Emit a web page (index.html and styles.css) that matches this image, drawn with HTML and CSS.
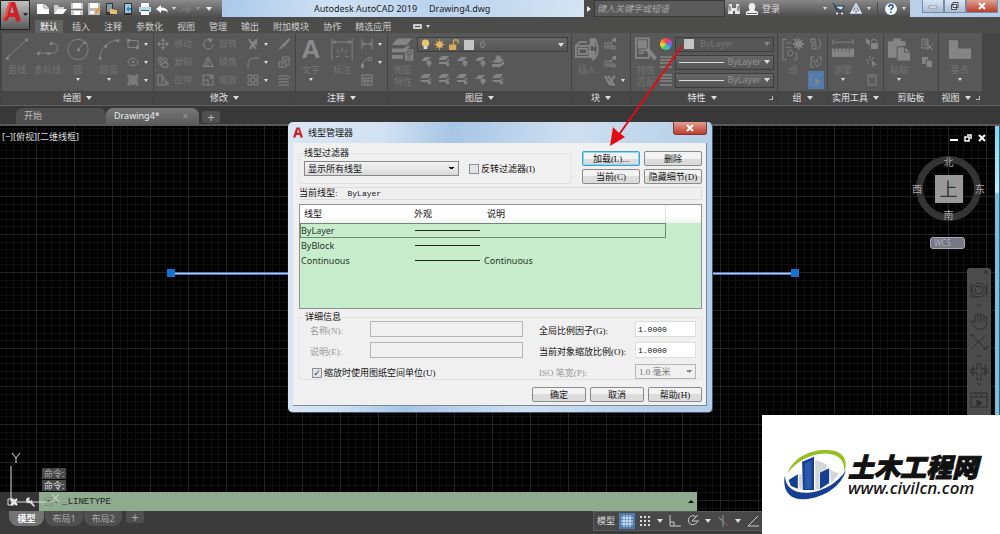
FILE: index.html
```html
<!DOCTYPE html>
<html lang="zh-CN">
<head>
    <meta charset="UTF-8">
    <meta name="viewport" content="width=device-width, initial-scale=1.0">
    <title>Autodesk AutoCAD 2019</title>
    <link rel="stylesheet" href="styles.css">
</head>
<body>

<!-- Iconos compartidos -->
<svg class="sprite" aria-hidden="true">
    <symbol id="line" viewBox="0 0 26 26"><path d="M2 22 24 2"/><path d="M1 21h3v3H1zM22 1h3v3h-3z" class="solid"/></symbol>
    <symbol id="pline" viewBox="0 0 26 26"><path d="M2 17h16a5.500 5.500 0 0 0 0-11M2 17l3-3"/><path d="M1 16h3v3H1zM12 16h3v3h-3zM15 5h3v3h-3z" class="solid"/></symbol>
    <symbol id="circle" viewBox="0 0 26 26"><circle cx="13" cy="13" r="11"/><path d="m13 13 7-8"/><path d="M12 12h3v3h-3zM19 4h3v3h-3z" class="solid"/></symbol>
    <symbol id="arc" viewBox="0 0 26 26"><path d="M3 23C4 12 10 4 23 3"/><path d="M2 21h3v3H2zM8 8h3v3H8zM21 2h3v3h-3z" class="solid"/></symbol>
    <symbol id="rect" viewBox="0 0 12 12"><path d="M1 2.500h10v7H1z"/><path d="M0 1h3v3H0zM9 8h3v3H9z" class="solid"/></symbol>
    <symbol id="ellipse" viewBox="0 0 12 12"><ellipse cx="6" cy="6" rx="5" ry="3.500"/><path d="M5 5h2v2H5z" class="solid"/></symbol>
    <symbol id="hatch" viewBox="0 0 12 12"><path d="M2 0v12M10 0v12M0 2h12M0 10h12M4 2v8M6 2v8M8 2v8M2 4h8M2 6h8M2 8h8"/></symbol>
    <symbol id="move" viewBox="0 0 12 12"><path d="M6 2v8M2 6h8"/><path d="m6 0 2.500 3h-5zM6 12l2.500-3h-5zM0 6l3-2.500v5zM12 6 9 3.500v5z" class="solid"/></symbol>
    <symbol id="rotate" viewBox="0 0 12 12"><path d="M8 2a4.700 4.700 0 1 0 3 5"/><path d="m6 0 5 1-3 4z" class="solid"/></symbol>
    <symbol id="copy" viewBox="0 0 12 12"><circle cx="3" cy="3" r="2"/><circle cx="8" cy="4" r="2"/><path d="M3 5v4h2M5 7h6v4H5z"/></symbol>
    <symbol id="mirror" viewBox="0 0 12 12"><path d="M6 1 1 10.500h10zM6 1v10M4 7v3"/></symbol>
    <symbol id="stretch" viewBox="0 0 12 12"><path d="M1 1h4l5 10H1zM5 1v10M7 8h4v3"/></symbol>
    <symbol id="scale" viewBox="0 0 12 12"><path d="M1 1h10v10H1zM1 6h5v5M7 5l3-3M7 2h3v3"/></symbol>
    <symbol id="trim" viewBox="0 0 12 12"><path d="m2 1 3 5 4 5M9 1v5L5 7l-2 4M5 6l3-3" stroke-width="2"/></symbol>
    <symbol id="fillet" viewBox="0 0 12 12"><path d="M1 12V8c0-4 3-6 7-6h4"/></symbol>
    <symbol id="array" viewBox="0 0 12 12"><path d="M1 1h4v4H1zM7 1h4v4H7zM1 7h4v4H1zM7 7h4v4H7z"/></symbol>
    <symbol id="erase" viewBox="0 0 12 12"><path d="m11 0 1 2-6 7-3-1zM3 8l2 2-5 2z" class="solid"/></symbol>
    <symbol id="explode" viewBox="0 0 12 12"><path d="M1 6h7v5H1zM4 4h7v5H8M4 4l1-3h6v3M3 8h3"/></symbol>
    <symbol id="offset" viewBox="0 0 12 12"><path d="M0 2h9c3 0 3 3 0 3M0 5h9M0 8h11M0 11h11"/></symbol>
    <symbol id="dim" viewBox="0 0 26 26"><path d="M2 1v24M24 1v24M3 5h20M13 11v5M7 13l3 4M19 13l-3 4M6 21l4-1M20 21l-4-1" /><path d="m2 5 4-2v4zM24 5l-4-2v4z" class="solid"/></symbol>
    <symbol id="dimlin" viewBox="0 0 12 12"><path d="M1 1v10M11 1v10M1 6h10M3 4v4M9 4v4"/></symbol>
    <symbol id="leader" viewBox="0 0 12 12"><path d="M1 11c0-4 2-7 6-8"/><circle cx="9" cy="3" r="2"/><path d="M0 8h3v4H0z" class="solid"/></symbol>
    <symbol id="table" viewBox="0 0 12 12"><path d="M1 1h10v10H1zM1 4h10M1 7h10M4 4v7M7 4v7"/></symbol>
    <symbol id="layers" viewBox="0 0 26 26"><path d="m7 1 16 0-6 7H1zM1 12h13l3-3h4l-4 5-3 2H1zM1 19h12v4H1z" class="solid"/><path d="M15 13h9v12h-9z" class="solid"/><path d="M17 15h5v3h-5zM17 20h5M17 23h5" class="dark"/></symbol>
    <symbol id="lay" viewBox="0 0 12 12"><path d="M4 1h7L8 5H0zM1 7h7l3-3v2L8 9H1z" class="solid"/><path d="M8 8h3v3H8z" class="solid"/></symbol>
    <symbol id="lay2" viewBox="0 0 12 12"><path d="M5 2h6L7 6H1z" class="solid"/><circle cx="9" cy="8" r="2.500" class="solid"/><path d="M9 8v4"/></symbol>
    <symbol id="lay3" viewBox="0 0 12 12"><path d="M3 3 6 0l4 3-3 2zM0 7l4-3h8l-4 4zM0 9h8l4-3v3l-4 3H0z" class="solid"/></symbol>
    <symbol id="insert" viewBox="0 0 26 26"><path d="M1 9h15v12H1zM1 9l4-4h8M4 12h9v6H4zM17 2h5c4 8 3 16-2 22l-3-4h-3" stroke-width="2"/><path d="M16 1h6v10l-6-3zM13 15l8 9 1-10z" class="solid"/></symbol>
    <symbol id="block" viewBox="0 0 12 12"><path d="M1 5h6v5H1zM7 5l4-4M8 8h3v3H8z"/><path d="M9 0h3v4L8 3zM3 7h2v2H3z" class="solid"/></symbol>
    <symbol id="attr" viewBox="0 0 12 12"><path d="m1 2 4 7 6-7M4 2l3 4 3 5M5 10l6 1" stroke-width="2"/></symbol>
    <symbol id="match" viewBox="0 0 26 26"><path d="M2 1h14v21H2zM5 4h8v7H5zM5 14h8M5 17h6" stroke-width="2"/><path d="m12 13 4-2 9 11-3 3z" class="solid"/><path d="M5 4h8v7H5z" class="solid"/></symbol>
    <symbol id="lines" viewBox="0 0 12 12"><path d="M0 1h12M0 4h12M0 7h12M0 11h12" stroke-width="1.500"/></symbol>
    <symbol id="group" viewBox="0 0 26 26"><path d="M6 2H2v22h4M13 2h4M14 24h3v-8M6 6h5M6 11h5"/><circle cx="10" cy="17" r="3"/><path d="M19 1v12M13 7h12M15 3l8 8M23 3l-8 8" stroke-width="2"/></symbol>
    <symbol id="ungroup" viewBox="0 0 12 12"><path d="M1 1h4v4H1zM2 7h4v4H2zM8 1c3 0 1 4 3 5-2 1 0 5-3 5"/></symbol>
    <symbol id="gedit" viewBox="0 0 12 12"><path d="M4 1H1v10h3M8 1h3v4M3 3l4 8M7 11l4-4M7 3v4"/></symbol>
    <symbol id="gsel" viewBox="0 0 12 12"><path d="M4 1H1v10h3M8 1h3"/><path d="m5 3 6 5-3 .5 1 3-1.500.5-1-3L5 11z" class="solid"/></symbol>
    <symbol id="measure" viewBox="0 0 26 26"><path d="M3 5h20M2 2v6M24 2v6"/><path d="M1 12h24v9H1z" class="solid"/><path d="M4 12v4M8 12v3M12 12v4M16 12v3M20 12v4" class="dark"/></symbol>
    <symbol id="qsel" viewBox="0 0 12 12"><path d="m0 0 5 4-2 1 1 3-4-3zM5 5h7v6H5z" class="solid"/><path d="m5 3 3-2 3 2"/></symbol>
    <symbol id="qpt" viewBox="0 0 12 12"><path d="m5 3 6 6H8l-1 3zM4 0v3M0 4h3M1 1l2 2" class="solid"/><path d="M4 0v3M0 4h3M8 1 6 3M1 8l2-2"/></symbol>
    <symbol id="calc" viewBox="0 0 12 12"><path d="M2 1h8v10H2zM4 3h4M4 6h1M7 6h1M4 9h1M7 9h1"/></symbol>
    <symbol id="paste" viewBox="0 0 26 26"><path d="M1 4h6V1h8v3h5v5h-4v13H1z" class="solid"/><path d="M11 10h8l6 6v9H11z" class="solid"/><path d="M11 24V10h8v6h6" class="dark"/></symbol>
    <symbol id="cut" viewBox="0 0 12 12"><path d="M1 1h6v9H1zM3 3h4M3 5h4M3 7h3M6 6l6 6M12 6l-6 6"/></symbol>
    <symbol id="clip" viewBox="0 0 12 12"><path d="M1 1h6v7H1z" class="solid"/><path d="M5 4h4l2 2v5H5z" class="solid"/><path d="M5 11V4h4" class="dark"/></symbol>
    <symbol id="base" viewBox="0 0 26 26"><path d="M1 3h10v9h14v11H1z" class="solid"/></symbol>
</svg>

<div class="app">
    <header class="titlebar">
        <div class="quick">
            <button aria-label="新建"><svg viewBox="0 0 14 12"><path d="M1 1h7l5 4v6H1z" fill="#fff"/><path d="M8 1v4h5" stroke="#888" fill="none"/></svg></button>
            <button aria-label="打开"><svg viewBox="0 0 14 12"><path d="M1 11V2h4l1 2h5v2H4z" fill="#ccc"/><path d="M4 6h10l-4 5H1z" fill="#f5f5f5"/></svg></button>
            <button aria-label="保存"><svg viewBox="0 0 14 12"><path d="M1 0h12v12H1z" fill="#c9c9c9"/><path d="M3 0h8v5H3zM4 8h6v4H4z" fill="#fff"/><path d="M1 6.500h12" stroke="#666"/></svg></button>
            <button aria-label="另存为"><svg viewBox="0 0 14 12"><path d="M1 0h12v12H1z" fill="#bbb"/><path d="M3 0h8v5H3zM3 8h5v3H3z" fill="#fff"/><path d="m7 11 1-3 4-4 2 2-4 4z" fill="#e69b3b"/></svg></button>
            <button aria-label="从移动设备打开"><svg viewBox="0 0 14 12"><path d="M2 0h7v12H2z" fill="#333"/><path d="M3 1h5v8H3z" fill="#829ba5"/><path d="M6 6h3l1 1h3v4H6z" fill="#e9c16c"/></svg></button>
            <button aria-label="保存到移动设备"><svg viewBox="0 0 14 12"><path d="M3 0h8v12H3z" fill="#333"/><path d="M4 1h6v9H4z" fill="#a6c6d8"/><path d="m5 6 3-3v2h2v2H8v2z" fill="#268bd0"/></svg></button>
            <button aria-label="打印"><svg viewBox="0 0 14 12"><path d="M3 0h8v4H3z" fill="#fff"/><path d="M1 4h12v5H1z" fill="#b7d8e9"/><path d="M3 7h8v5H3z" fill="#fff"/><path d="M3 7.500h8" stroke="#356480"/></svg></button>
            <button aria-label="放弃"><svg viewBox="0 0 14 12"><path d="m1 6 5-4v2.500c4 0 7 2 7 5-2-2-4-2-7-2V10z" fill="#fff"/></svg></button>
            <i class="arrow"></i>
            <button aria-label="重做"><svg viewBox="0 0 14 12"><path d="M13 6 8 2v2.500c-4 0-7 2-7 5 2-2 4-2 7-2V10z" fill="#777"/></svg></button>
            <i class="arrow dim"></i>
            <i class="arrow over"></i>
        </div>
        <h1 class="title"><span>Autodesk AutoCAD 2019</span><span>Drawing4.dwg</span></h1>
        <div class="search">
            <i class="expand"></i>
            <input type="text" placeholder="键入关键字或短语" aria-label="搜索">
        </div>
        <div class="account">
            <svg viewBox="0 0 14 12"><path d="M2 1h3v4h4V1h3l1 10H8V8H6v3H1z" fill="#e6e6e6"/><path d="M3 3v5M11 3v5" stroke="#555"/></svg>
            <a href="#" class="login"><svg viewBox="0 0 14 12"><path d="M7 0c4 0 4 5 2 7l4 2v3H1V9l4-2C3 5 3 0 7 0z" fill="#eee"/><path d="M2 10.500h10" stroke="#666"/></svg>登录</a>
            <i class="arrow push"></i>
            <svg viewBox="0 0 14 12"><path d="M1 1h2l3 7h6M4 3h9l-2 4H6z" fill="#d6e7f5" stroke="#1b3550"/><circle cx="6" cy="10.500" r="1" fill="#fff"/><circle cx="11" cy="10.500" r="1" fill="#fff"/></svg>
            <svg viewBox="0 0 14 12"><path d="M7 1 2 10h10zM7 4v3l-4 3M7 7l4 3" fill="none" stroke="#dcecff" stroke-width="1.500"/></svg>
            <i class="arrow"></i>
            <i class="split"></i>
            <svg viewBox="0 0 14 12"><circle cx="7" cy="6" r="6" fill="#eef5fb"/><path d="M5 4c0-3 4-3 4-.5C9 5 7 5 7 7M7 8.500V10" fill="none" stroke="#184c86" stroke-width="1.500"/></svg>
            <i class="arrow"></i>
        </div>
        <div class="winbtns">
            <button aria-label="最小化"><svg viewBox="0 0 12 8"><path d="M2 4h8v2H2z" fill="#fff" stroke="#555" stroke-width=".5"/></svg></button>
            <button aria-label="还原"><svg viewBox="0 0 12 8"><path d="M4 .5h5v5H4zM2.500 2.500h5v5h-5z" fill="#eee" stroke="#445"/></svg></button>
            <button class="close" aria-label="关闭"><svg viewBox="0 0 12 8"><path d="m3 1 6 6M9 1 3 7" stroke="#fff" stroke-width="2"/></svg></button>
        </div>
    </header>

    <nav class="tabs">
        <a href="#" class="active">默认</a>
        <a href="#">插入</a>
        <a href="#">注释</a>
        <a href="#">参数化</a>
        <a href="#">视图</a>
        <a href="#">管理</a>
        <a href="#">输出</a>
        <a href="#">附加模块</a>
        <a href="#">协作</a>
        <a href="#">精选应用</a>
        <button aria-label="功能区显示"><i class="toggle"></i><i class="arrow"></i></button>
    </nav>

    <section class="ribbon">
        <div class="panel">
            <div class="tools">
                <button class="big"><svg><use href="#line"/></svg>直线</button>
                <button class="big"><svg><use href="#pline"/></svg>多段线</button>
                <button class="big"><svg><use href="#circle"/></svg>圆<i class="arrow"></i></button>
                <button class="big"><svg><use href="#arc"/></svg>圆弧<i class="arrow"></i></button>
                <div class="small">
                    <button aria-label="矩形"><svg><use href="#rect"/></svg><i class="arrow"></i></button>
                    <button aria-label="椭圆"><svg><use href="#ellipse"/></svg><i class="arrow"></i></button>
                    <button aria-label="图案填充"><svg><use href="#hatch"/></svg><i class="arrow"></i></button>
                </div>
            </div>
            <h2>绘图<i class="arrow"></i></h2>
        </div>

        <div class="panel">
            <div class="tools">
                <div class="small">
                    <button><svg><use href="#move"/></svg>移动</button>
                    <button><svg><use href="#copy"/></svg>复制</button>
                    <button><svg><use href="#stretch"/></svg>拉伸</button>
                </div>
                <div class="small">
                    <button><svg><use href="#rotate"/></svg>旋转</button>
                    <button><svg><use href="#mirror"/></svg>镜像</button>
                    <button><svg><use href="#scale"/></svg>缩放</button>
                </div>
                <div class="small">
                    <button aria-label="修剪"><svg><use href="#trim"/></svg><i class="arrow"></i></button>
                    <button aria-label="圆角"><svg><use href="#fillet"/></svg><i class="arrow"></i></button>
                    <button aria-label="阵列"><svg><use href="#array"/></svg><i class="arrow"></i></button>
                </div>
                <div class="small">
                    <button aria-label="删除对象"><svg><use href="#erase"/></svg></button>
                    <button aria-label="分解"><svg><use href="#explode"/></svg></button>
                    <button aria-label="偏移"><svg><use href="#offset"/></svg></button>
                </div>
            </div>
            <h2>修改<i class="arrow"></i></h2>
        </div>

        <div class="panel">
            <div class="tools">
                <button class="big"><b class="letter">A</b>文字<i class="arrow"></i></button>
                <button class="big"><svg><use href="#dim"/></svg>标注</button>
                <div class="small">
                    <button aria-label="线性"><svg><use href="#dimlin"/></svg><i class="arrow"></i></button>
                    <button aria-label="引线"><svg><use href="#leader"/></svg><i class="arrow"></i></button>
                    <button aria-label="表格"><svg><use href="#table"/></svg></button>
                </div>
            </div>
            <h2>注释<i class="arrow"></i></h2>
        </div>

        <div class="panel">
            <div class="tools">
                <button class="big"><svg><use href="#layers"/></svg>图层<br>特性</button>
                <div class="layerbox">
                    <button class="combo" aria-label="图层">
                        <svg viewBox="0 0 12 12"><circle cx="6" cy="4.500" r="4" fill="#e9c56c"/><path d="M4 8h4v3H4z" fill="#ddd"/></svg>
                        <svg viewBox="0 0 12 12"><path d="M6 0v12M0 6h12M2 2l8 8M10 2l-8 8" stroke="#c4a25b"/><circle cx="6" cy="6" r="3.500" fill="#e2b65d"/></svg>
                        <svg viewBox="0 0 12 12"><path d="M6 6V3c0-3 5-3 5 0v2" stroke="#d0a85d" stroke-width="1.500" fill="none"/><path d="M1 6h8v6H1z" fill="#d9a955"/></svg>
                        <i class="swatch"></i>0<i class="arrow push"></i>
                    </button>
                    <div class="layertools">
                        <button aria-label="关"><svg><use href="#lay2"/></svg></button>
                        <button aria-label="隔离"><svg><use href="#lay"/></svg></button>
                        <button aria-label="冻结"><svg><use href="#lay2"/></svg></button>
                        <button aria-label="锁定"><svg><use href="#lay2"/></svg></button>
                        <button aria-label="置为当前"><svg><use href="#lay3"/></svg></button>
                        <button aria-label="打开所有图层"><svg><use href="#lay"/></svg></button>
                        <button aria-label="取消隔离"><svg><use href="#lay"/></svg></button>
                        <button aria-label="解冻"><svg><use href="#lay"/></svg></button>
                        <button aria-label="解锁"><svg><use href="#lay2"/></svg></button>
                        <button aria-label="匹配图层"><svg><use href="#lay"/></svg></button>
                    </div>
                </div>
            </div>
            <h2>图层<i class="arrow"></i></h2>
        </div>

        <div class="panel">
            <div class="tools">
                <button class="big"><svg><use href="#insert"/></svg>插入</button>
                <div class="small">
                    <button aria-label="创建块"><svg><use href="#block"/></svg></button>
                    <button aria-label="编辑块"><svg><use href="#block"/></svg></button>
                    <button aria-label="编辑属性"><svg><use href="#attr"/></svg><i class="arrow"></i></button>
                </div>
            </div>
            <h2>块<i class="arrow"></i></h2>
        </div>

        <div class="panel">
            <div class="tools">
                <button class="big"><svg><use href="#match"/></svg>特性<br>匹配</button>
                <div class="props">
                    <i class="wheel"></i>
                    <button class="combo flat"><i class="swatch"></i>ByLayer<i class="arrow push"></i></button>
                    <svg><use href="#lines"/></svg>
                    <button class="combo"><i class="stroke"></i>ByLayer<i class="arrow"></i></button>
                    <svg><use href="#lines"/></svg>
                    <button class="combo"><i class="stroke"></i>ByLayer<i class="arrow"></i></button>
                </div>
            </div>
            <h2 class="wide">特性<i class="arrow"></i><span><i class="launch"></i></span></h2>
        </div>

        <div class="panel">
            <div class="tools">
                <button class="big"><svg><use href="#group"/></svg>组</button>
                <div class="small">
                    <button aria-label="解除编组"><svg><use href="#ungroup"/></svg></button>
                    <button aria-label="组编辑"><svg><use href="#gedit"/></svg></button>
                    <button class="on" aria-label="组选择"><svg><use href="#gsel"/></svg></button>
                </div>
            </div>
            <h2>组<i class="arrow"></i></h2>
        </div>

        <div class="panel">
            <div class="tools">
                <button class="big"><svg><use href="#measure"/></svg>测量<i class="arrow"></i></button>
                <div class="small">
                    <button aria-label="快速选择"><svg><use href="#qsel"/></svg></button>
                    <button aria-label="点"><svg><use href="#qpt"/></svg></button>
                    <button aria-label="计算器"><svg><use href="#calc"/></svg></button>
                </div>
            </div>
            <h2>实用工具<i class="arrow"></i></h2>
        </div>

        <div class="panel">
            <div class="tools">
                <button class="big"><svg><use href="#paste"/></svg>粘贴<i class="arrow"></i></button>
                <div class="small">
                    <button aria-label="剪切"><svg><use href="#cut"/></svg></button>
                    <button aria-label="复制剪裁"><svg><use href="#clip"/></svg></button>
                </div>
            </div>
            <h2>剪贴板</h2>
        </div>

        <div class="panel">
            <div class="tools center">
                <button class="big"><svg><use href="#base"/></svg>基点<i class="arrow"></i></button>
            </div>
            <h2>视图<i class="arrow"></i><i class="launch"></i></h2>
        </div>
    </section>

    <nav class="files">
        <a href="#">开始</a>
        <a href="#" class="active">Drawing4*<span>✕</span></a>
        <button aria-label="新图形">+</button>
    </nav>

    <main class="canvas">
        <p class="viewlabel">[−][俯视][二维线框]</p>

        <div class="segment"></div>

        <div class="viewctl">
            <button aria-label="最小化视口"><svg viewBox="0 0 8 8"><path d="M0 5h8v2H0z" fill="#fff"/></svg></button>
            <button aria-label="还原视口"><svg viewBox="0 0 8 8"><path d="M3 1h4v4M1 3h4v4H1z" stroke="#fff" stroke-width="1.500" fill="none"/></svg></button>
            <button aria-label="关闭视口"><svg viewBox="0 0 8 8"><path d="m1 1 6 6M7 1 1 7" stroke="#fff" stroke-width="2"/></svg></button>
        </div>

        <div class="cube">
            <span class="north">北</span>
            <span class="west">西</span>
            <button>上</button>
            <span class="east">东</span>
            <span class="south">南</span>
        </div>
        <button class="wcs">WCS</button>

        <div class="navbar">
            <svg viewBox="0 0 24 147" fill="none" stroke="#2c2c2c">
                <path d="m17 2 4 4M21 2l-4 4"/>
                <circle cx="12" cy="22" r="7"/><circle cx="12" cy="22" r="4"/><path d="M4 15v14h6M20 15v14"/>
                <path d="m10 36 2 2 2-2"/>
                <path d="M8 59c-6-6-3-8 0-4v-7c0-2 3-2 3 0 0-3 3-3 3 0 1-2 3-1 3 1 1-1 3 0 3 1 0 6-1 11-5 11-4 1-5 0-7-2zM11 48v6M14 48v6M17 49v5"/>
                <path d="m4 67 15 14M19 67 4 81M3 67h4M16 81h4v-4"/>
                <path d="m10 87 2 2 2-2"/>
                <path d="M10 96h4v5h6v4h-6v7h-4v-7H4v-4h6zM6 97v11M18 97v11"/>
                <path d="m10 115 2 2 2-2"/>
                <path d="M4 125h16v14H4zM4 129h16M9 125v4M14 125v4"/><path d="m10 132 5 3-5 3z" fill="#2c2c2c"/>
            </svg>
        </div>

        <div class="edge"></div>

        <svg class="ucs" viewBox="0 0 60 60" fill="none" stroke="#ddd"><path d="M11 17v36h40M8 50h6v6H8zM12 4l4 5 4-5M16 9v5M52 45l7 8M59 45l-7 8"/></svg>

        <div class="history"><span>命令:</span><span>命令:</span></div>
        <div class="command">
            <div class="handle">
                <button aria-label="关闭命令行"><svg viewBox="0 0 10 10"><path d="m2 2 6 6M8 2 2 8" stroke="#fff" stroke-width="2"/></svg></button>
                <button aria-label="自定义"><svg viewBox="0 0 10 10"><path d="M1 3c0-2 2-3 4-2L4 3l1 1 2-1c1 1 0 2 0 2l3 4-1 1-4-4C2 7 1 5 1 3z" fill="#ddd"/></svg></button>
            </div>
            <label for="cmd">▣ -</label>
            <input type="text" id="cmd" value="_LINETYPE">
            <i class="up"></i>
        </div>
    </main>

    <footer class="bottom">
        <nav class="layouts">
            <a href="#" class="active">模型</a>
            <a href="#">布局1</a>
            <a href="#">布局2</a>
            <button aria-label="新布局">+</button>
        </nav>
        <div class="status">
            <button>模型</button>
            <button class="on" aria-label="栅格"><svg viewBox="0 0 12 12"><path d="M3 0v12M6 0v12M9 0v12M0 3h12M0 6h12M0 9h12" stroke="#e8f2ff"/></svg></button>
            <button aria-label="捕捉"><svg viewBox="0 0 12 12"><path d="M1 2h10M1 6h10M1 10h10" stroke="#ddd" stroke-width="2" stroke-dasharray="2 2"/></svg><i class="arrow"></i></button>
            <button aria-label="正交"><svg viewBox="0 0 12 12"><path d="M1 0v11h11M1 7h4v4" stroke="#ccc" fill="none"/></svg></button>
            <button aria-label="极轴"><svg viewBox="0 0 12 12"><path d="M9 2a4.500 4.500 0 1 0 1 5M5 6h7M5 6l6-6" stroke="#ccc" fill="none"/></svg><i class="arrow"></i></button>
            <button aria-label="等轴测"><svg viewBox="0 0 12 12"><path d="m1 1 10 10" stroke="#b55"/><path d="M6 0v12M6 6 2 3" stroke="#7a9"/></svg><i class="arrow"></i></button>
            <button aria-label="对象追踪"><svg viewBox="0 0 12 12"><path d="M11 1 1 11h11" stroke="#ccc" fill="none"/></svg></button>
        </div>
    </footer>
</div>

<div class="dialog" role="dialog" aria-labelledby="dlgTitle">
    <div class="dlghead">
        <svg viewBox="0 0 12 12"><path d="M0 12 4 0h4l4 12H9L8 9H4l-1 3zM5 6h3L6 2z" fill="#c9252b" fill-rule="evenodd"/></svg>
        <h2 id="dlgTitle">线型管理器</h2>
        <button aria-label="关闭"><svg viewBox="0 0 12 8"><path d="m3 1 6 6M9 1 3 7" stroke="#fff" stroke-width="2"/></svg></button>
    </div>
    <form class="dlgbody">
        <div class="top">
            <fieldset>
                <legend>线型过滤器</legend>
                <div class="filter">
                    <select aria-label="线型过滤器"><option>显示所有线型</option></select>
                    <input type="checkbox" id="invert"><label for="invert">反转过滤器(I)</label>
                </div>
            </fieldset>
            <div class="actions">
                <button type="button" class="focus">加载(L)...</button>
                <button type="button">删除</button>
                <button type="button">当前(C)</button>
                <button type="button">隐藏细节(D)</button>
            </div>
        </div>

        <p class="current"><span>当前线型:</span><span class="mono">ByLayer</span></p>

        <div class="list">
            <table>
                <thead>
                    <tr><th class="name">线型</th><th class="look">外观</th><th class="desc">说明</th><th></th></tr>
                </thead>
                <tbody>
                    <tr class="selected"><td>ByLayer</td><td><i class="sample"></i></td><td></td><td></td></tr>
                    <tr><td>ByBlock</td><td><i class="sample"></i></td><td></td><td></td></tr>
                    <tr><td>Continuous</td><td><i class="sample"></i></td><td>Continuous</td><td></td></tr>
                </tbody>
            </table>
        </div>

        <fieldset class="details">
            <legend>详细信息</legend>
            <div class="fields">
                <label for="nombre" class="off">名称(N):</label>
                <input type="text" id="nombre" disabled>
                <label for="global">全局比例因子(G):</label>
                <input type="text" id="global" value="1.0000">

                <label for="desc" class="off">说明(E):</label>
                <input type="text" id="desc" disabled>
                <label for="object">当前对象缩放比例(O):</label>
                <input type="text" id="object" value="1.0000">

                <div class="check"><input type="checkbox" id="paper" checked><label for="paper">缩放时使用图纸空间单位(U)</label></div>
                <label for="iso" class="off">ISO 笔宽(P):</label>
                <select id="iso" disabled><option>1.0 毫米</option></select>
            </div>
        </fieldset>

        <div class="confirm">
            <button type="button">确定</button>
            <button type="button">取消</button>
            <button type="button">帮助(H)</button>
        </div>
    </form>
</div>

<svg class="appicon" viewBox="0 0 30 30"><path d="M0 0h30v30H0z" fill="url(#ic)"/><defs><linearGradient id="ic" x2="0" y2="1"><stop stop-color="#c4c4c4"/><stop offset="1" stop-color="#555"/></linearGradient></defs><path d="M.5.500h29v29H.5z" fill="none" stroke="#222"/><path d="M3 20 9 2h6l6 19-5 1-1-5H9l-2 4zM10 13h4l-2-7z" fill="#cf2027" fill-rule="evenodd"/><path d="M3 20 9 2h2L7 16z" fill="#ef5450"/><path d="M23 13h5l-2.500 3z" fill="#222"/></svg>

<svg class="pointer" viewBox="0 0 76 108"><path d="M74 2 10 92" stroke="#e30b12" stroke-width="2"/><path d="m2 102 3-19 5 5 7 5z" fill="#e30b12"/></svg>

<aside class="watermark">
    <svg viewBox="608 112 194 158"><path d="M622 186C640 140 690 116 740 117c50 1 68 28 53 69 4-36-13-58-58-59-45 1-85 23-113 59z" fill="#93c01f"/><path d="M614 193c-9 42 11 75 58 73 63-4 113-41 127-88-24 37-69 65-114 68-45 2-70-16-71-53z" fill="#143f93"/><path d="m706 146 34 14v16l-22 13v46h-12zM751 177l27 11-24 28zM656 190h9v46l-9-3z" fill="#d3d5d8"/><path d="m625 208 28-18v44l-21-8zM666 152l36-15v101h-34zM720 186l28-14v45l-28 18z" fill="#143f93"/><path d="m674 157 20-8v86h-20z" fill="#2b5aab"/></svg>
    <div>
        <strong>土木工程网</strong>
        <em>www.civilcn.com</em>
    </div>
</aside>

</body>
</html>
```
FILE: styles.css
```css
* {
    box-sizing: border-box;
}

body {
    margin: 0;
    overflow: hidden;
    position: relative;
    font-family: "Noto Sans", "Noto Sans CJK SC", sans-serif;
    font-size: 9px;
    line-height: 12px;
    background-color: #3b3b3b;
    color: #ddd;
}

button, input, select {
    font: inherit;
    color: inherit;
    margin: 0;
}

button {
    display: flex;
    align-items: center;
    justify-content: center;
    padding: 0;
    border: none;
    background: none;
    white-space: nowrap;
}

a {
    color: inherit;
    text-decoration: none;
}

h1, h2, p {
    margin: 0;
    font-size: 9px;
    font-weight: normal;
}

.sprite {
    position: absolute;
    width: 0;
    height: 0;
}

.app {
    display: flex;
    flex-direction: column;
    height: 100vh;
}

.arrow {
    flex: none;
    border: 2px solid transparent;
    border-top: 3px solid #ddd;
    border-bottom: 0;
}

.push {
    margin-left: auto;
}

/* Barra de título */
.titlebar {
    display: flex;
    height: 17px;
    background: linear-gradient(90deg, #b6cfea, #cfe0f2 50%, #b4cce6);
}

.titlebar svg {
    width: 14px;
    height: 12px;
}

.quick {
    display: flex;
    align-items: center;
    gap: 3px;
    width: 222px;
    padding-left: 36px;
    background: linear-gradient(#8b8b8b, #4c4c4c);
}

.quick > button {
    flex: none;
    width: 14px;
}

.quick .dim {
    border-top-color: #999;
}

.quick .over {
    margin-left: 3px;
    border-width: 3px;
    border-top: 4px solid #eee;
    border-bottom: 0;
}

.title {
    flex: 1;
    display: flex;
    gap: 12px;
    padding-left: 92px;
    color: #222;
    line-height: 17px;
    white-space: nowrap;
    background: linear-gradient(100deg, #a9c8ea, #cfe1f4 30%, #b9d2ec 60%, #d5e4f3);
}

.search {
    display: flex;
    width: 141px;
    background-color: #4a4a4a;
}

.search .expand {
    align-self: center;
    margin: 0 3px;
    border: 3px solid transparent;
    border-left: 4px solid #eee;
    border-right: 0;
}

.search input {
    flex: 1;
    min-width: 0;
    border: 1px solid #3a3a3a;
    padding: 0 2px;
    background-color: #5a5a5a;
    font-style: italic;
}

.search input::placeholder {
    color: #a8a8a8;
}

.account {
    display: flex;
    align-items: center;
    gap: 4px;
    width: 185px;
    padding: 0 4px 0 2px;
    background: linear-gradient(#888, #4b4b4b);
}

.login {
    display: flex;
    gap: 3px;
    white-space: nowrap;
}

.split {
    width: 1px;
    height: 13px;
    margin: 0 2px;
    background-color: #4a4a4a;
}

.winbtns {
    display: flex;
    width: 90px;
    height: 13px;
    padding: 0 2px 0 12px;
}

.winbtns button {
    flex: 2;
    border: 1px solid #788ba3;
    border-top: 0;
    background: linear-gradient(#d8e4f1, #a9bdd4);
}

.winbtns .close {
    flex: 3;
    background: linear-gradient(#e0a094, #b93c27);
}

.winbtns svg {
    width: 12px;
    height: 8px;
}

/* Pestañas de la cinta */
.tabs {
    display: flex;
    align-items: flex-end;
    gap: 6px;
    height: 16px;
    padding-left: 35px;
    background-color: #4c4c4b;
    color: #ccc;
}

.tabs a {
    padding: 0 3px;
    margin: 0 1px;
    line-height: 13px;
}

.tabs .active {
    margin: 0 -1px 0 0;
    padding: 0 5px;
    background-color: #636363;
    color: #fff;
}

.tabs button {
    gap: 4px;
    height: 13px;
    margin-left: 12px;
}

.toggle {
    width: 9px;
    height: 5px;
    border: 2px solid #ccc;
    border-radius: 1px;
}

/* Cinta */
.ribbon {
    display: grid;
    grid-template-columns: 152fr 142fr 92fr 184fr 59fr 147fr 50fr 56fr 55fr 44fr;
    height: 73px;
    padding: 0 17px 0 2px;
    background-color: #454545;
    border-bottom: 1px solid #606060;
    color: #747474;
}

.panel {
    display: flex;
    flex-direction: column;
    min-width: 0;
    border-right: 1px solid #434343;
    background-color: #585858;
}

.panel h2 {
    display: flex;
    align-items: center;
    justify-content: center;
    gap: 5px;
    height: 14px;
    background-color: #474747;
    color: #e2e2e2;
    white-space: nowrap;
}

.panel h2 .arrow, .combo .arrow, .status .arrow {
    border-width: 3px;
    border-top-width: 4px;
    border-bottom: 0;
}

.panel .wide::before {
    content: "";
    flex: 1;
}

.wide span {
    flex: 1;
    display: flex;
    justify-content: flex-end;
    padding-right: 4px;
}

.launch {
    width: 4px;
    height: 4px;
    border-right: 1px solid #bbb;
    border-bottom: 1px solid #bbb;
}

.tools {
    flex: 1;
    display: flex;
    justify-content: space-between;
    padding: 2px 3px 0 1px;
}

.center {
    justify-content: center;
}

.panel svg {
    fill: none;
    stroke: #858585;
}

.solid {
    fill: #858585;
    stroke: none;
}

.dark {
    stroke: #585858;
}

.big {
    flex-direction: column;
    justify-content: flex-start;
    min-width: 28px;
    padding-top: 2px;
}

.big svg, .letter {
    width: 24px;
    height: 25px;
    margin-bottom: 2px;
}

.big .arrow {
    margin-top: 2px;
}

.letter {
    font: bold 26px/25px "Liberation Sans", sans-serif;
    color: #8a8a8a;
}

.small {
    display: grid;
    grid-template-rows: 18px 18px 18px;
}

.small button {
    justify-content: flex-start;
    gap: 5px;
    padding: 0 2px;
}

.small svg, .layertools svg, .props svg {
    width: 12px;
    height: 12px;
}

.on {
    background-color: #4f7baf;
}

.layerbox {
    flex: 1;
}

.combo {
    justify-content: flex-start;
    gap: 3px;
    height: 15px;
    padding: 0 3px;
    border: 1px solid #3d3d3d;
    background: linear-gradient(#666, #555);
    color: #929292;
}

.layerbox .combo {
    width: 100%;
    margin-top: 2px;
    padding-left: 2px;
}

.combo svg {
    width: 11px;
    height: 11px;
    stroke: none;
}

.swatch {
    width: 10px;
    height: 10px;
    margin: 0 3px 0 2px;
    background-color: #c4c4c4;
}

.layertools {
    display: grid;
    grid-template: 18px 18px / repeat(5, 18px);
}

.props {
    flex: 1;
    display: grid;
    grid-template: 18px 18px 18px / 12px 1fr;
    align-items: center;
    gap: 0 3px;
}

.wheel {
    width: 12px;
    height: 12px;
    border-radius: 50%;
    background: conic-gradient(#e8453c, #d840b8, #5577e8, #35c4dc, #4fc850, #f3dc3c, #ef8a35, #e8453c);
}

.flat {
    padding-left: 6px;
    background: #565656;
    color: #777;
}

.flat .arrow {
    border-top-color: #888;
}

.stroke {
    flex: 1;
    height: 1px;
    background-color: #ddd;
}

/* Pestañas de archivos */
.files {
    display: flex;
    align-items: flex-end;
    height: 20px;
    padding-left: 16px;
    background-color: #383838;
    border-bottom: 2px solid #5a5a5a;
    color: #bbb;
}

.files a {
    width: 90px;
    padding-left: 8px;
    line-height: 16px;
    border-radius: 7px 7px 0 0;
    background-color: #4f4f4f;
}

.files .active {
    display: flex;
    justify-content: space-between;
    width: 93px;
    padding-right: 10px;
    background: linear-gradient(#777, #5c5c5c);
    color: #eee;
}

.files span {
    color: #999;
    font-size: 8px;
}

.files button, .layouts button {
    width: 18px;
    height: 12px;
    margin: 0 0 1px 3px;
    border-radius: 3px;
    background-color: #505050;
    font-size: 13px;
}

/* Área de dibujo */
.canvas {
    position: relative;
    flex: 1;
    background-color: #000;
    background-image:
        linear-gradient(90deg, #232323 1px, transparent 1px),
        linear-gradient(#232323 1px, transparent 1px),
        linear-gradient(90deg, transparent 8px, #0f0f0f 8px 9px, transparent 9px 15px, #0f0f0f 15px 16px, transparent 16px 23px, #0f0f0f 23px 24px, transparent 24px 30px, #0f0f0f 30px 31px, transparent 31px),
        linear-gradient(transparent 8px, #0f0f0f 8px 9px, transparent 9px 15px, #0f0f0f 15px 16px, transparent 16px 23px, #0f0f0f 23px 24px, transparent 24px 30px, #0f0f0f 30px 31px, transparent 31px);
    background-size: 38px 38px;
    background-position: -2px -6px;
}

.viewlabel {
    padding: 5px 2px;
}

.segment {
    position: absolute;
    left: 171px;
    top: 146px;
    width: 624px;
    height: 3px;
    background: linear-gradient(#1b3f90, #b9cdf5, #1b3f90);
}

.segment::before, .segment::after {
    content: "";
    position: absolute;
    top: -3px;
    left: -4px;
    width: 8px;
    height: 8px;
    background-color: #1374d3;
}

.segment::after {
    left: auto;
    right: -4px;
}

.viewctl {
    position: absolute;
    top: 8px;
    right: 14px;
    display: flex;
    gap: 6px;
}

.viewctl svg {
    width: 8px;
    height: 8px;
}

.cube {
    position: absolute;
    top: 30px;
    right: 19px;
    width: 65px;
    height: 65px;
    display: grid;
    grid-template: 18px 29px 18px / 18px 29px 18px;
    place-items: center;
    border: 7px solid #343434;
    border-radius: 50%;
    place-content: center;
    color: #aaa;
    font-size: 10px;
}

.north, .south {
    grid-column: 2;
}

.north {
    align-self: start;
}

.south {
    align-self: end;
}

.west, .east {
    margin: 0 -4px;
}

.west {
    grid-column: 1;
    justify-self: start;
}

.east {
    justify-self: end;
}

.cube button {
    width: 28px;
    height: 28px;
    background-color: #999;
    color: #333;
    font-size: 18px;
}

.wcs {
    position: absolute;
    top: 111px;
    right: 35px;
    width: 35px;
    height: 12px;
    justify-content: flex-start;
    padding-left: 3px;
    border: 1px solid #aaaab6;
    border-radius: 3px;
    background-color: #777784;
    color: #b0b0ba;
    font-size: 8px;
}

.navbar {
    position: absolute;
    top: 142px;
    right: 9px;
    width: 24px;
    height: 160px;
    border-radius: 3px;
    background-color: #4c4c4c;
}

.navbar svg {
    display: block;
    width: 24px;
}

.edge {
    position: absolute;
    top: 0;
    right: 0;
    bottom: 0;
    width: 5px;
    border-right: 1px solid #23677c;
    background: linear-gradient(#86d2ef, #c8ecf8 66px, #85bbdc 68px);
}

.ucs {
    position: absolute;
    left: 0;
    bottom: 2px;
    width: 60px;
    height: 60px;
    z-index: 1;
}

.history {
    position: absolute;
    left: 42px;
    bottom: 20px;
    display: flex;
    flex-direction: column;
    gap: 1px;
}

.history span {
    padding: 0 2px;
    line-height: 11px;
    background-color: #484848;
}

.history span:first-child {
    color: #aaa;
}

.command {
    position: absolute;
    left: 0;
    bottom: 0;
    width: 697px;
    height: 19px;
    display: flex;
    align-items: center;
    background-color: #8eaa8f;
    color: #1c241c;
}

.handle {
    display: flex;
    gap: 6px;
    align-self: stretch;
    width: 39px;
    padding-left: 9px;
    background: #343434;
}

.handle svg {
    width: 10px;
    height: 10px;
}

.command label {
    padding-left: 5px;
    color: #555;
}

.command input {
    flex: 1;
    border: none;
    padding: 0 4px;
    background: none;
    font-family: "Liberation Mono", monospace;
}

.up {
    margin-right: 3px;
    border: 3px solid transparent;
    border-bottom: 3px solid #111;
    border-top: 0;
}

/* Barra inferior */
.bottom {
    display: flex;
    align-items: flex-start;
    height: 23px;
    background-color: #3b3b3b;
}

.layouts {
    flex: 1;
    display: flex;
    gap: 1px;
    padding-left: 9px;
    color: #aaa;
}

.layouts a {
    width: 38px;
    height: 15px;
    text-align: center;
    line-height: 15px;
    border-radius: 0 0 9px 9px;
    background-color: #505050;
}

.layouts .active {
    width: 35px;
    background-color: #747474;
    color: #fff;
    font-weight: bold;
}

.status {
    display: flex;
    gap: 2px;
    width: 407px;
    height: 20px;
    padding: 1px;
    border: 1px solid #5a5a5a;
    background-color: #484848;
}

.status button {
    gap: 6px;
    padding: 0 2px;
}

.status svg {
    width: 12px;
    height: 12px;
}

/* Diálogo */
.dialog {
    position: absolute;
    left: 288px;
    top: 122px;
    width: 425px;
    padding: 0 5px 6px;
    border: 1px solid #41566e;
    border-width: 0 1px 1px 0;
    border-radius: 5px;
    background: linear-gradient(100deg, #d9e6f4, #d3e2f2 20%, #a7c6e6 35%, #cfdff0 60%, #b4cfe9 90%);
    color: #111;
    font-family: "Liberation Serif", "Noto Sans CJK SC", serif;
    white-space: nowrap;
}

.dlghead {
    display: flex;
    align-items: center;
    gap: 5px;
    height: 21px;
}

.dlghead > svg {
    width: 10px;
    height: 11px;
}

.dlghead button {
    align-self: flex-start;
    width: 34px;
    height: 13px;
    margin-left: auto;
    border: 1px solid #7c3b35;
    border-top: 0;
    border-radius: 0 0 3px 3px;
    background: linear-gradient(#e2a092, #bd3c2a);
}

.dlghead button svg {
    width: 12px;
    height: 8px;
}

.dlgbody {
    padding: 4px 4px 3px 6px;
    border: 1px solid #7a8795;
    border-width: 0 1px 1px 0;
    background-color: #f0f0f0;
}

fieldset {
    margin: 0;
    padding: 0 5px;
    border: 1px solid #e3e3e3;
    min-width: 0;
}

legend {
    padding: 0;
}

.top {
    display: flex;
    gap: 10px;
}

.top fieldset {
    flex: 1;
    padding: 2px 4px 4px;
}

.filter {
    display: flex;
    align-items: center;
}

.filter select {
    width: 155px;
    margin-right: 10px;
}

select {
    height: 15px;
    padding: 0 3px;
    appearance: none;
    border: 1px solid #888;
    border-radius: 0;
    background:
        conic-gradient(from -45deg at 50% 100%, #111 0deg 90deg, transparent 90deg) right 3px center / 0 0 no-repeat,
        linear-gradient(to bottom left, #111 50%, transparent 50%) right 6px center / 3px 3px no-repeat,
        linear-gradient(to bottom right, #111 50%, transparent 50%) right 3px center / 3px 3px no-repeat,
        linear-gradient(#f3f3f3, #dadada);
}

input[type="checkbox"] {
    flex: none;
    display: grid;
    place-items: center;
    appearance: none;
    width: 10px;
    height: 10px;
    margin-right: 2px;
    border: 1px solid #8c8f94;
    background-color: #e2e5e8;
}

input[type="checkbox"]:checked::before {
    content: "✓";
    color: #26416f;
    font: bold 9px/8px "DejaVu Sans", sans-serif;
}

.actions {
    display: grid;
    grid-template: 15px 15px / 58px 58px;
    gap: 3px 4px;
    padding-top: 4px;
}

.actions button, .confirm button {
    border: 1px solid #8a8a8a;
    border-radius: 2px;
    background: linear-gradient(#f3f3f3 50%, #dcdcdc 50%);
}

.actions .focus {
    border-color: #3aa0cd;
    box-shadow: inset 0 0 0 1px #8bd8f3;
}

.current {
    display: flex;
    gap: 10px;
    height: 13px;
    margin-top: 3px;
    border: 1px solid #dcdcdc;
    border-left: 0;
    line-height: 11px;
}

.mono, .fields input {
    font-family: "Liberation Mono", monospace;
    font-size: 8px;
}

.list {
    height: 105px;
    margin-top: 4px;
    border: 1px solid #8a938c;
    background-color: #c8edcc;
    font-family: "Noto Sans", "Noto Sans CJK SC", sans-serif;
}

table {
    width: 100%;
    table-layout: fixed;
    border-collapse: separate;
    border-spacing: 0;
}

th {
    height: 18px;
    padding: 0 4px;
    text-align: left;
    font-weight: normal;
    background: linear-gradient(#fff 60%, #f1f2f4);
}

td {
    height: 15px;
    padding: 0 1px;
    line-height: 13px;
    color: #243626;
}

.name {
    width: 110px;
}

.look {
    width: 73px;
}

.desc {
    width: 183px;
    border-right: 1px solid #e2e3e5;
}

.selected td:not(:last-child) {
    border: solid #6d8a70;
    border-width: 1px 0;
}

.selected td:first-child {
    box-shadow: inset 1px 0 #6d8a70;
}

.selected td:nth-child(3) {
    box-shadow: inset -1px 0 #6d8a70;
}

.sample {
    display: block;
    width: 65px;
    height: 1px;
    margin-left: 4px;
    background-color: #222;
}

.details {
    margin-top: 3px;
}

.details legend {
    line-height: 11px;
}

.fields {
    display: grid;
    grid-template: 17px 17px 17px / 60px 153px 1fr 61px;
    gap: 4px 0;
    align-items: end;
    margin-top: -3px;
    padding-left: 5px;
}

.fields > input {
    width: 100%;
    height: 16px;
    padding: 0 2px;
    border: 1px solid #ddd;
    background-color: #fff;
}

.fields > input:disabled {
    border-color: #b5b5b5;
    background-color: #f0f0f0;
}

.off {
    color: #999;
}

.fields select:disabled {
    opacity: 1;
    color: #777;
    border-color: #b5b5b5;
    background:
        linear-gradient(to bottom left, #888 50%, transparent 50%) right 6px center / 3px 3px no-repeat,
        linear-gradient(to bottom right, #888 50%, transparent 50%) right 3px center / 3px 3px no-repeat,
        #f0f0f0;
}

.check {
    grid-column: 1 / 3;
    display: flex;
    align-items: center;
    padding-left: 2px;
}

.fields > input:disabled + label, .check + label {
    padding-left: 16px;
}

.confirm {
    display: flex;
    justify-content: flex-end;
    gap: 4px;
    margin-top: 7px;
}

.confirm button {
    width: 54px;
    height: 15px;
}

/* Logo, flecha y marca de agua */
.appicon {
    position: absolute;
    left: 0;
    top: 0;
    width: 30px;
    height: 30px;
}

.pointer {
    position: absolute;
    left: 608px;
    top: 44px;
    width: 76px;
    height: 108px;
}

.watermark {
    position: absolute;
    right: 0;
    bottom: 0;
    display: flex;
    align-items: center;
    gap: 1px;
    width: 238px;
    height: 119px;
    padding-left: 21px;
    background-color: #fff;
    color: #111;
    white-space: nowrap;
}

.watermark svg {
    width: 64px;
    height: 53px;
}

.watermark strong, .watermark em {
    display: block;
}

.watermark strong {
    font: italic 900 26px/26px "Noto Sans CJK SC", sans-serif;
    -webkit-text-stroke: 1px #111;
}

.watermark em {
    font-size: 17px;
    line-height: 18px;
    font-weight: 500;
}
```
